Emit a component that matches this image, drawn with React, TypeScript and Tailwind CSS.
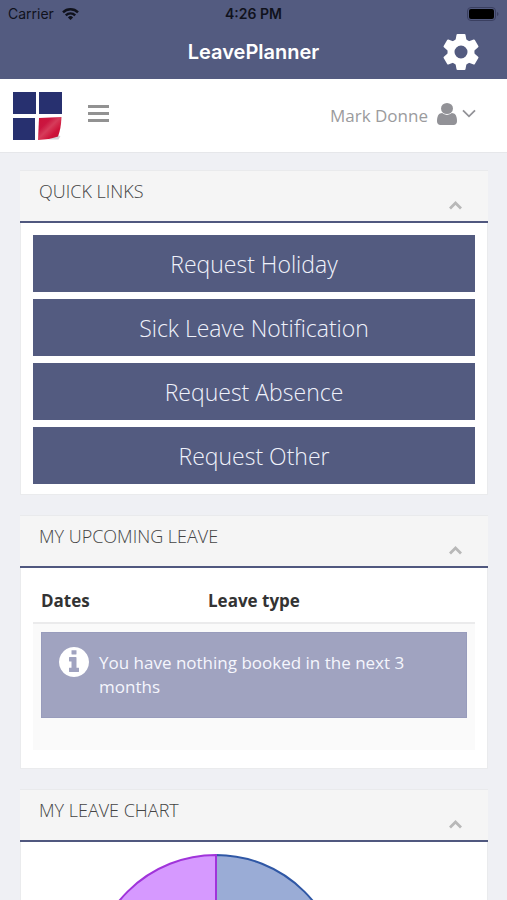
import { useState, type ReactNode } from "react";

function StatusBar() {
  return (
    <div className="grid h-6 grid-cols-3 items-center pt-1 pr-2 pl-2 font-['Inter',sans-serif] text-sm leading-5 text-[#10121c]">
      <div className="flex items-center gap-2">
        <span>Carrier</span>
        <svg viewBox="0 0 17 12" className="h-3 w-[17px]" fill="none" stroke="currentColor" strokeWidth="2.4" aria-hidden="true">
          <path d="M1 4.4a10.600 10.600 0 0 1 15 0" />
          <path d="M3.800 7.300a6.700 6.700 0 0 1 9.400 0" />
          <path d="M8.500 12 5.900 9.400a3.700 3.700 0 0 1 5.200 0Z" fill="currentColor" stroke="none" />
        </svg>
      </div>
      <span className="text-center font-semibold">4:26 PM</span>
      <svg viewBox="0 0 32 14" className="h-[14px] w-8 justify-self-end" aria-hidden="true">
        <rect x="0.500" y="0.500" width="28" height="13" rx="3.500" fill="none" stroke="#3a3f60" />
        <rect x="2" y="2" width="25" height="10" rx="2" fill="#000" />
        <path d="M30 5v4q1.500-.6 1.500-2T30 5Z" fill="#3a3f60" />
      </svg>
    </div>
  );
}

const gearAngles = [0, 60, 120, 180, 240, 300];

function GearIcon() {
  return (
    <svg viewBox="-18 -18 36 36" className="size-9" fill="none" stroke="currentColor" aria-hidden="true">
      <circle r="10" strokeWidth="7" />
      <g fill="currentColor" strokeWidth="2" strokeLinejoin="round">
        {gearAngles.map((angle) => (
          <path key={angle} d="M-3.500-17h7L4.500-11.500h-9Z" transform={`rotate(${angle})`} />
        ))}
      </g>
    </svg>
  );
}

function InfoIcon() {
  return (
    <svg viewBox="128 128 1536 1536" className="size-[30px] shrink-0" fill="#fff" aria-hidden="true">
      <path d="M1152 1376v-160q0-14-9-23t-23-9h-96v-512q0-14-9-23t-23-9h-320q-14 0-23 9t-9 23v160q0 14 9 23t23 9h96v320h-96q-14 0-23 9t-9 23v160q0 14 9 23t23 9h448q14 0 23-9t9-23zm-128-896v-160q0-14-9-23t-23-9h-192q-14 0-23 9t-9 23v160q0 14 9 23t23 9h192q14 0 23-9t9-23zm640 416q0 209-103 385.500t-279.500 279.500-385.500 103-385.500-103-279.500-279.500-103-385.500 103-385.500 279.500-279.500 385.500-103 385.500 103 279.500 279.500 103 385.500z" />
    </svg>
  );
}

function Logo() {
  return (
    <svg viewBox="0 0 50 50" className="size-[50px]" role="img" aria-label="LeavePlanner">
      <defs>
        <linearGradient id="fold" x1="0" y1="0" x2="1" y2="1">
          <stop offset="0" stopColor="#cb1237" />
          <stop offset="0.300" stopColor="#cb1640" />
          <stop offset="0.480" stopColor="#d63c5a" />
          <stop offset="0.700" stopColor="#ce1239" />
          <stop offset="1" stopColor="#bd1034" />
        </linearGradient>
      </defs>
      <path d="M1 1h23v22H1zM27 1h23v22H27zM1 27h22v22H1z" fill="#27306f" />
      <path d="M36 48.500 46 44.500 48.500 45 46.500 48.500Z" fill="#d4d4d8" />
      <path d="M27 27 49.500 26Q49 38 46 45.500 38 48.500 26 49Z" fill="url(#fold)" />
    </svg>
  );
}

function Panel({ title, children }: { title: string; children: ReactNode }) {
  const [open, setOpen] = useState(true);
  return (
    <section className="border-x border-b border-[#eaebed] bg-white">
      <header className="-mx-px flex h-[53px] justify-between border-t border-b-2 border-t-[#e9eaec] border-b-[#50587f] bg-[#f5f5f5] pr-[26px] pl-[19px]">
        <h2 className="pt-2 text-lg leading-6 font-light text-[#444]">{title}</h2>
        <button
          type="button"
          aria-label={`Toggle ${title}`}
          aria-expanded={open}
          onClick={() => setOpen(!open)}
          className="mt-6 flex h-5 cursor-pointer items-center text-[#b8b8b8]"
        >
          <svg viewBox="0 0 13 9" className="h-[9px] w-[13px]" fill="none" stroke="currentColor" strokeWidth="2.800" aria-hidden="true">
            <path d="M1 7.500 6.500 2 12 7.500" />
          </svg>
        </button>
      </header>
      {open && children}
    </section>
  );
}

const quickLinks = ["Request Holiday", "Sick Leave Notification", "Request Absence", "Request Other"];

export default function App() {
  return (
    <div className="flex h-screen flex-col overflow-hidden bg-[#eff0f4] font-['Open_Sans','Noto_Sans',sans-serif]">
      <div className="shrink-0 bg-[#535b80]">
        <StatusBar />
        <div className="grid h-[55px] grid-cols-[1fr_auto_1fr] items-center px-7 font-['Inter',sans-serif]">
          <h1 className="col-start-2 text-xl leading-7 font-semibold text-white">LeavePlanner</h1>
          <button type="button" aria-label="Settings" className="cursor-pointer justify-self-end text-white">
            <GearIcon />
          </button>
        </div>
      </div>

      <nav className="flex h-[74px] shrink-0 items-center border-b border-[#e6e7ea] bg-white pr-[31px] pl-3">
        <Logo />
        <button type="button" aria-label="Menu" className="ml-[26px] flex w-[21px] cursor-pointer flex-col gap-1 pb-1">
          <span className="h-[3px] bg-[#929292]" />
          <span className="h-[3px] bg-[#929292]" />
          <span className="h-[3px] bg-[#929292]" />
        </button>
        <button type="button" className="ml-auto flex cursor-pointer items-center text-[17px] leading-6 text-[#9b9b9d]">
          Mark Donne
          <svg viewBox="256 128 1280 1536" className="mb-1 ml-[9px] h-[22px] w-5" preserveAspectRatio="none" fill="#929297" aria-hidden="true">
            <path d="M1536 1399q0 109-62.500 187t-150.500 78h-854q-88 0-150.500-78t-62.500-187q0-85 8.500-160.500t31.500-152 58.500-131 94-89 134.500-34.500q131 128 313 128t313-128q76 0 134.500 34.500t94 89 58.500 131 31.500 152 8.500 160.500z" />
            <circle cx="896" cy="512" r="384" />
          </svg>
          <svg viewBox="0 0 14 9" className="mb-1 ml-[5px] h-[9px] w-[14px]" fill="none" stroke="#929297" strokeWidth="1.800" aria-hidden="true">
            <path d="M1 1.300 7 7.300 13 1.300" />
          </svg>
        </button>
      </nav>

      <main className="flex min-h-0 flex-1 flex-col gap-5 overflow-y-auto pt-[17px] pr-[19px] pl-5 [scrollbar-width:none] *:shrink-0">
        <Panel title="QUICK LINKS">
          <div className="flex flex-col gap-[7px] px-3 pt-3 pb-[10px]">
            {quickLinks.map((label) => (
              <button key={label} type="button" className="h-[57px] cursor-pointer bg-[#535b80] text-[23px] leading-8 font-light text-[#f0f2fb]">
                {label}
              </button>
            ))}
          </div>
        </Panel>

        <Panel title="MY UPCOMING LEAVE">
          <div className="px-3 pb-[18px]">
            <table className="w-full table-fixed text-left text-[17px] leading-6 text-[#333]">
              <thead>
                <tr className="h-[55px] border-b-2 border-[#ebebec]">
                  <th className="w-[167px] px-2 pt-3 font-bold">Dates</th>
                  <th className="px-2 pt-3 font-bold">Leave type</th>
                </tr>
              </thead>
              <tbody>
                <tr className="bg-[#fafafa]">
                  <td colSpan={2} className="px-2 pt-2 pb-8">
                    <div className="flex h-[86px] gap-[10px] border border-[#989cbc] bg-[#a0a3c0] px-[17px] pt-[14px] text-[#f5f6fd]">
                      <InfoIcon />
                      <p className="mt-1">You have nothing booked in the next 3 months</p>
                    </div>
                  </td>
                </tr>
              </tbody>
            </table>
          </div>
        </Panel>

        <Panel title="MY LEAVE CHART">
          <div className="px-[69px] py-3">
            <svg viewBox="0 0 252 252" className="size-[252px]" strokeWidth="2" role="img" aria-label="Leave chart">
              <path d="M126 126V1A125 125 0 0 1 126 251Z" fill="#9aacd6" stroke="#2f57a5" />
              <path d="M126 126V251A125 125 0 0 1 126 1Z" fill="#d699ff" stroke="#a034da" />
            </svg>
          </div>
        </Panel>
      </main>
    </div>
  );
}
